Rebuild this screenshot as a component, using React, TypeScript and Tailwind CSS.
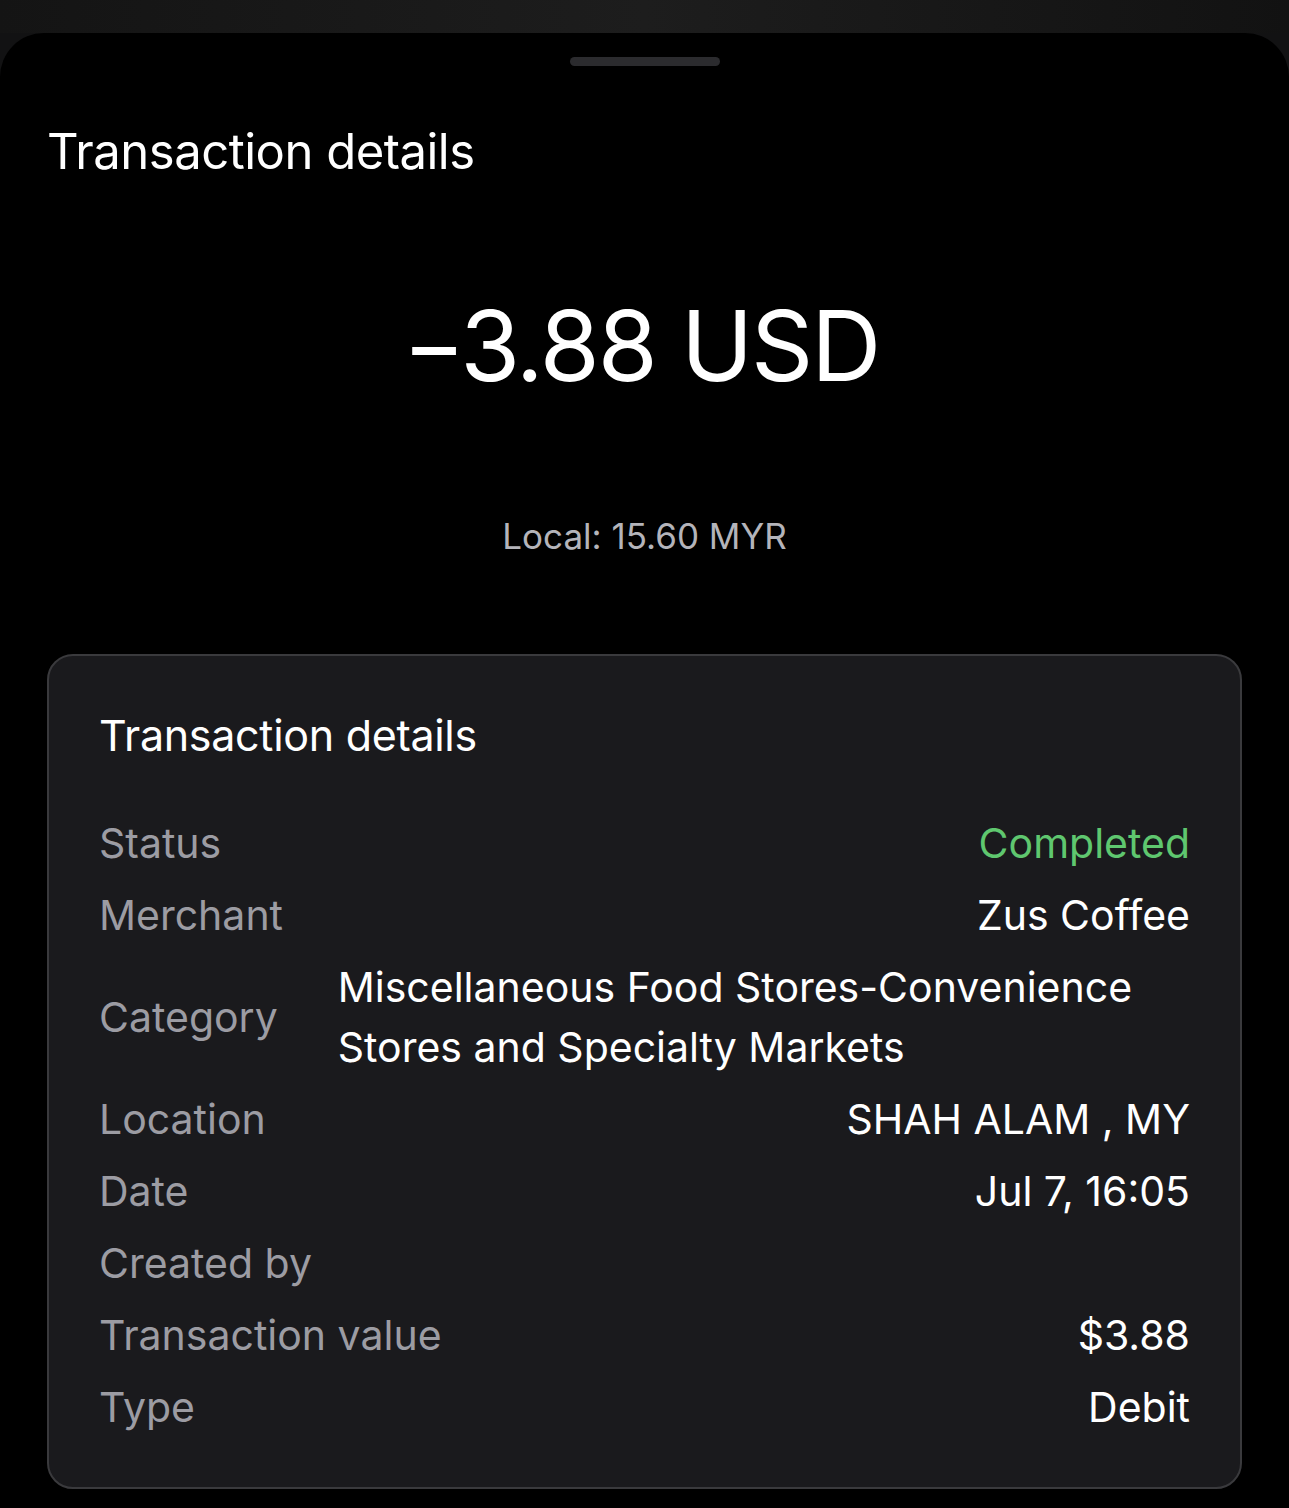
const rows: { label: string; value: string; tone?: "green" | "muted" }[] = [
  { label: "Status", value: "Completed", tone: "green" },
  { label: "Merchant", value: "Zus Coffee" },
  {
    label: "Category",
    value: "Miscellaneous Food Stores-Convenience Stores and Specialty Markets"
  },
  { label: "Location", value: "SHAH ALAM , MY" },
  { label: "Date", value: "Jul 7, 16:05" },
  { label: "Created by", value: "", tone: "muted" },
  { label: "Transaction value", value: "$3.88" },
  { label: "Type", value: "Debit" }
]

function DetailRow({
  label,
  value,
  tone
}: {
  label: string
  value: string
  tone?: "green" | "muted"
}) {
  return (
    <div className="flex items-center gap-[60px] py-[6px]">
      <span className="shrink-0 text-[#9c9ca3]">{label}</span>
      <span
        className={`ml-auto min-h-[60px] text-left ${
          tone === "green" ? "text-[#5fc76f]" : "text-white"
        }`}>
        {value}
      </span>
    </div>
  )
}

export default function App() {
  return (
    <div
      className="min-h-[1508px] bg-[#121213] pt-[33px]"
      style={{ fontFamily: "Inter, 'Noto Sans', sans-serif" }}>
      <div className="relative -mt-[33px] h-[33px] bg-gradient-to-r from-[#141414] via-[#1d1d1d] to-[#121212]" />
      <div className="min-h-[1475px] rounded-t-[44px] bg-black px-[47px] pb-[20px]">
        <div className="flex justify-center pt-[24px]">
          <div className="h-[9px] w-[150px] rounded-full bg-[#2b2b2e]" />
        </div>

        <h1 className="mt-[56px] text-[49px] leading-[60px] tracking-[-0.5px] text-white">
          Transaction details
        </h1>

        <div className="mt-[114px] text-center text-[97px] leading-[100px] tracking-[-2px] text-white">
          <span className="mr-[4px] inline-block scale-x-90">–</span>3.88 USD
        </div>

        <div className="mt-[120px] text-center text-[35px] leading-[40px] text-[#b4b4ba]">
          Local: 15.60 MYR
        </div>

        <div className="mt-[98px] rounded-[26px] border-2 border-[#3a3a3d] bg-[#1a1a1d] px-[50px] pb-[44px] pt-[49px]">
          <h2 className="text-[43px] leading-[60px] tracking-[-0.3px] text-white">
            Transaction details
          </h2>
          <div className="mt-[42px] text-[41px] leading-[60px]">
            {rows.map((r) => (
              <DetailRow key={r.label} {...r} />
            ))}
          </div>
        </div>
      </div>
    </div>
  )
}
